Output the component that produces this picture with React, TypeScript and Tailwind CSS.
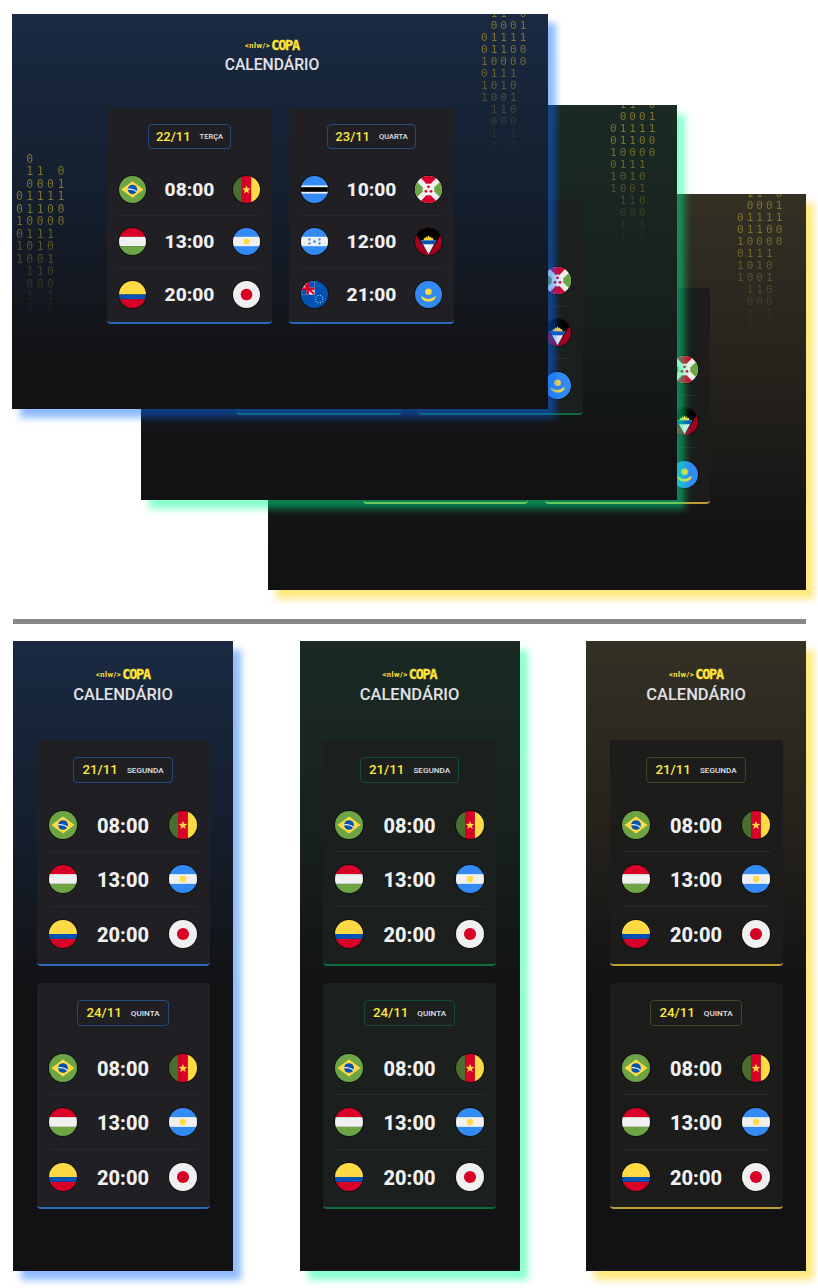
import React from "react";

type ThemeName = "blue" | "green" | "yellow";
type Size = "lg" | "sm";

const themes = {
  blue: {
    win: "bg-linear-to-b from-[#1a2a42] via-[#141e2d] via-[190px] to-[#121214] to-[350px]",
    shadow: "shadow-[8px_9px_7px_rgba(9,107,255,0.46)]",
    card: "bg-[#202024]",
    edge: "border-b-[#2a68b8]",
    pill: "border-[#214a80]",
  },
  green: {
    win: "bg-linear-to-b from-[#1b2a25] via-[#17211e] via-[190px] to-[#121214] to-[350px]",
    shadow: "shadow-[8px_9px_7px_rgba(0,255,150,0.46)]",
    card: "bg-[#1b1f1d]",
    edge: "border-b-[#0f6a3c]",
    pill: "border-[#124b30]",
  },
  yellow: {
    win: "bg-linear-to-b from-[#343024] via-[#25221c] via-[190px] to-[#121214] to-[350px]",
    shadow: "shadow-[8px_9px_7px_rgba(255,210,0,0.5)]",
    card: "bg-[#1c1c1b]",
    edge: "border-b-[#bda030]",
    pill: "border-[#4a4120]",
  },
};

const GREEN = "#6da544";
const YELLOW = "#ffda44";
const BLUE = "#0052b4";
const SKY = "#338af3";
const RED = "#d80027";
const WHITE = "#f0f0f0";

const Star = ({ cx, cy, r, fill }: { cx: number; cy: number; r: number; fill: string }) => {
  const pts: string[] = [];
  for (let i = 0; i < 10; i++) {
    const rad = i % 2 === 0 ? r : r * 0.42;
    const a = -Math.PI / 2 + (i * Math.PI) / 5;
    pts.push(`${cx + rad * Math.cos(a)},${cy + rad * Math.sin(a)}`);
  }
  return <polygon points={pts.join(" ")} fill={fill} />;
};

const flags: Record<string, React.ReactNode> = {
  br: (
    <>
      <rect width="512" height="512" fill={GREEN} />
      <polygon points="256,100 467,256 256,412 45,256" fill={YELLOW} />
      <circle cx="256" cy="256" r="89" fill={BLUE} />
      <path d="M170 240c50-10 120 5 170 50l-8 20c-45-45-110-55-168-45z" fill={WHITE} />
    </>
  ),
  cm: (
    <>
      <rect width="167" height="512" fill="#496e2d" />
      <rect x="167" width="178" height="512" fill={RED} />
      <rect x="345" width="167" height="512" fill={YELLOW} />
      <Star cx={256} cy={262} r={84} fill={YELLOW} />
    </>
  ),
  hu: (
    <>
      <rect width="512" height="167" fill={RED} />
      <rect y="167" width="512" height="178" fill={WHITE} />
      <rect y="345" width="512" height="167" fill={GREEN} />
    </>
  ),
  ar: (
    <>
      <rect width="512" height="512" fill={SKY} />
      <rect y="167" width="512" height="178" fill={WHITE} />
      <circle cx="256" cy="256" r="58" fill={YELLOW} />
    </>
  ),
  co: (
    <>
      <rect width="512" height="256" fill={YELLOW} />
      <rect y="256" width="512" height="90" fill={BLUE} />
      <rect y="346" width="512" height="166" fill={RED} />
    </>
  ),
  jp: (
    <>
      <rect width="512" height="512" fill={WHITE} />
      <circle cx="256" cy="256" r="111" fill={RED} />
    </>
  ),
  bw: (
    <>
      <rect width="512" height="512" fill={SKY} />
      <rect y="178" width="512" height="156" fill={WHITE} />
      <rect y="212" width="512" height="88" fill="#000" />
    </>
  ),
  bi: (
    <>
      <rect width="512" height="512" fill={WHITE} />
      <polygon points="75,0 437,0 256,190" fill={RED} />
      <polygon points="75,512 437,512 256,322" fill={RED} />
      <polygon points="0,75 0,437 190,256" fill={GREEN} />
      <polygon points="512,75 512,437 322,256" fill={GREEN} />
      <circle cx="256" cy="256" r="112" fill={WHITE} />
      <circle cx="256" cy="205" r="26" fill={RED} />
      <circle cx="208" cy="290" r="26" fill={RED} />
      <circle cx="304" cy="290" r="26" fill={RED} />
    </>
  ),
  hn: (
    <>
      <rect width="512" height="512" fill={SKY} />
      <rect y="167" width="512" height="178" fill={WHITE} />
      <circle cx="256" cy="256" r="24" fill={SKY} />
      <circle cx="160" cy="218" r="22" fill={SKY} />
      <circle cx="160" cy="294" r="22" fill={SKY} />
      <circle cx="352" cy="218" r="22" fill={SKY} />
      <circle cx="352" cy="294" r="22" fill={SKY} />
    </>
  ),
  ag: (
    <>
      <rect width="512" height="512" fill="#a2001d" />
      <polygon points="0,0 512,0 512,100 256,500 0,100" fill="#000" />
      <polygon points="108,230 404,230 256,500" fill={WHITE} />
      <polygon points="108,230 404,230 362,310 150,310" fill={BLUE} />
      <path d="M160 230l12-45 28 12 8-40 24 22 24-40 24 40 24-22 8 40 28-12 12 45z" fill={YELLOW} />
    </>
  ),
  ck: (
    <>
      <rect width="512" height="512" fill={BLUE} />
      <rect width="256" height="256" fill={WHITE} />
      <polygon points="0,60 60,0 256,196 256,256 196,256" fill={WHITE} />
      <polygon points="0,30 30,0 256,226 256,256 226,256" fill={RED} />
      <rect x="0" y="120" width="256" height="52" fill={RED} />
      <rect x="100" y="0" width="52" height="256" fill={RED} />
      <polygon points="152,0 256,0 256,120 152,120" fill={BLUE} />
      <polygon points="0,172 100,172 100,256 0,256" fill={BLUE} />
      {[0, 1, 2, 3, 4, 5, 6, 7, 8, 9].map((i) => (
        <circle
          key={i}
          cx={345 + 72 * Math.cos((i * Math.PI) / 5)}
          cy={345 + 72 * Math.sin((i * Math.PI) / 5)}
          r="10"
          fill={WHITE}
        />
      ))}
    </>
  ),
  kz: (
    <>
      <rect width="512" height="512" fill={SKY} />
      <circle cx="256" cy="205" r="62" fill={YELLOW} />
      <path d="M115 290c25 2 45 12 65 28 22 16 48 22 76 22s54-6 76-22c20-16 40-26 65-28-8 38-30 68-65 84-24 11-48 16-76 16s-52-5-76-16c-35-16-57-46-65-84z" fill={YELLOW} />
    </>
  ),
};

const Flag = ({ code, size }: { code: string; size: Size }) => (
  <svg
    viewBox="0 0 512 512"
    className={`shrink-0 rounded-full shadow-[0_0_0_1px_rgba(0,0,0,0.45)] ${size === "lg" ? "w-7 h-7" : "w-[27px] h-[27px]"}`}
  >
    {flags[code]}
  </svg>
);

const Logo = () => (
  <div className="flex items-center justify-center h-[10px] text-[#ffe23a]">
    <span className="text-[7.5px] font-bold tracking-[0.5px] font-['Roboto',sans-serif] leading-none">&lt;nlw/&gt;</span>
    <span className="ml-[1px] text-[13.5px] font-bold tracking-[-1.2px] font-['DejaVu_Sans_Mono',monospace] leading-none [-webkit-text-stroke:0.3px_#ffe23a]">COPA</span>
  </div>
);

type Day = { date: string; label: string; rows: [string, string, string][] };

const Card = ({ day, theme, size }: { day: Day; theme: ThemeName; size: Size }) => {
  const t = themes[theme];
  const lg = size === "lg";
  return (
    <div
      className={`rounded-[4px] border-b-2 ${t.card} ${t.edge} ${lg ? "w-[173px] h-[226px] px-3 pt-[17px]" : "w-[165px] h-[216px] px-[12px] pt-4"}`}
    >
      <div className="flex justify-center">
        <div
          className={`flex items-center rounded-[4px] border ${t.pill} ${lg ? "h-[26px] px-[8px] gap-[9px]" : "h-[25px] px-[7px] gap-[9px]"}`}
        >
          <span className={`text-[#fde93b] font-medium ${lg ? "text-[13.3px]" : "text-[13px]"}`}>{day.date}</span>
          <span className={`text-[#e1e1e6] font-medium ${lg ? "text-[8.1px]" : "text-[7.5px]"}`}>{day.label}</span>
        </div>
      </div>
      <div className="mt-[15px]">
        {day.rows.map(([a, time, b], i) => (
          <div
            key={time}
            className={`flex items-center justify-between ${i < 2 ? "border-b border-[#29292e]" : ""} ${lg ? "h-[54.4px]" : "h-[52px]"}`}
          >
            <Flag code={a} size={size} />
            <span className={`pt-[2px] font-extrabold text-[#f0f0f0] ${lg ? "text-[20px]" : "text-[19.2px]"}`}>{time}</span>
            <Flag code={b} size={size} />
          </div>
        ))}
      </div>
    </div>
  );
};

const day = (date: string, label: string): Day => ({
  date,
  label,
  rows: [
    ["br", "08:00", "cm"],
    ["hu", "13:00", "ar"],
    ["co", "20:00", "jp"],
  ],
});

const day23: Day = {
  date: "23/11",
  label: "QUARTA",
  rows: [
    ["bw", "10:00", "bi"],
    ["hn", "12:00", "ag"],
    ["ck", "21:00", "kz"],
  ],
};

const binary = [" 0", " 11 0", " 0001", "01111", "01100", "10000", "0111", "1010", "1001", " 110", " 000", " 1 1", " 1 0"];

const Matrix = ({ side }: { side: "left" | "right" }) => (
  <div
    className={`absolute whitespace-pre font-['DejaVu_Sans_Mono',monospace] bg-linear-to-b from-[#7f7530] from-35% to-transparent to-100% bg-clip-text text-transparent ${
      side === "left"
        ? "left-[4px] top-[139px] text-[11.5px] leading-[12.45px] tracking-[3.45px]"
        : "left-[469px] top-[-18px] text-[11px] leading-[12px] tracking-[3.05px]"
    }`}
  >
    {binary.join("\n")}
  </div>
);

const Wide = ({ theme, className }: { theme: ThemeName; className: string }) => {
  const t = themes[theme];
  return (
    <div className={`absolute w-[536px] h-[395px] ${t.win} ${t.shadow} ${className}`}>
      <div className="absolute inset-0 overflow-hidden">
        <Matrix side="right" />
        <Matrix side="left" />
      </div>
      <div className="relative pt-[27px] pr-4">
        <Logo />
        <h1 className="mt-[4px] text-center text-[15.7px] leading-[20px] font-medium text-[#e1e1e6]">CALENDÁRIO</h1>
      </div>
      <div className="relative mt-[33px] flex gap-[17px] pl-[95px]">
        <Card day={day("22/11", "TERÇA")} theme={theme} size="sm" />
        <Card day={day23} theme={theme} size="sm" />
      </div>
    </div>
  );
};

const Phone = ({ theme }: { theme: ThemeName }) => {
  const t = themes[theme];
  return (
    <div className={`w-[220px] h-[630px] ${t.win} ${t.shadow}`}>
      <div className="pt-[29px]">
        <Logo />
        <h1 className="mt-[4px] text-center text-[16.5px] leading-[22px] font-medium text-[#e1e1e6]">CALENDÁRIO</h1>
      </div>
      <div className="mt-[34px] flex flex-col items-center gap-[17px]">
        <Card day={day("21/11", "SEGUNDA")} theme={theme} size="lg" />
        <Card day={day("24/11", "QUINTA")} theme={theme} size="lg" />
      </div>
    </div>
  );
};

export default function App() {
  return (
    <div className="w-[818px] h-[1288px] bg-white overflow-hidden font-['Roboto',sans-serif]">
      <div className="relative h-[619px]">
        <Wide theme="yellow" className="left-[268px] top-[194px] w-[538px] h-[396px]" />
        <Wide theme="green" className="left-[141px] top-[105px]" />
        <Wide theme="blue" className="left-[12px] top-[14px]" />
      </div>
      <div className="mx-[13px] h-[5px] w-[793px] bg-[#888888]" />
      <div className="mx-[13px] mt-[17px] flex w-[793px] justify-between">
        <Phone theme="blue" />
        <Phone theme="green" />
        <Phone theme="yellow" />
      </div>
    </div>
  );
}
